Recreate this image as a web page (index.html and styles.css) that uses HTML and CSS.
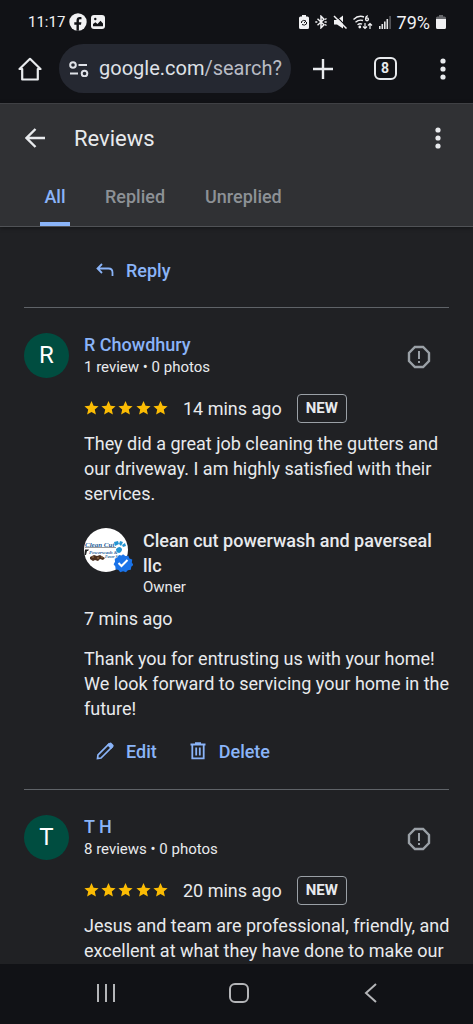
FILE: index.html
```html
<!DOCTYPE html>
<html lang="en">
<head>
    <meta charset="UTF-8">
    <meta name="viewport" content="width=device-width, initial-scale=1.0">
    <title>Reviews</title>
    <link rel="stylesheet" href="styles.css">
</head>
<body>
    <!-- shared shapes -->
    <svg class="defs" aria-hidden="true">
        <symbol id="stars" viewBox="0 0 84 14">
            <g fill="#fbbc04">
                <path id="star" d="M7.5 0l2.1 4.7 5 .5-3.8 3.4 1.1 5-4.4-2.6-4.4 2.6 1.1-5L.4 5.2l5-.5z"/>
                <use href="#star" x="17"/>
                <use href="#star" x="34"/>
                <use href="#star" x="52"/>
                <use href="#star" x="69"/>
            </g>
        </symbol>
        <symbol id="report" viewBox="0 0 24 24">
            <path d="M7.9 2h8.2L22 7.9v8.2L16.100 22H7.900L2 16.100V7.900z" fill="none" stroke="currentColor" stroke-width="2.400"/>
            <path d="M11 6h2v8h-2zM11 16h2v2h-2z" fill="currentColor"/>
        </symbol>
        <symbol id="dots" viewBox="0 0 6 22">
            <g fill="currentColor"><circle cx="3" cy="3" r="2.600"/><circle cx="3" cy="11" r="2.600"/><circle cx="3" cy="19" r="2.600"/></g>
        </symbol>
    </svg>

    <div class="status-bar">
        <span class="clock">11:17</span>
        <svg width="18" height="18" viewBox="0 0 18 18">
            <circle cx="9" cy="9" r="8.700" fill="#f1f1f3"/>
            <path d="M7.500 17.700v-6H5.300V9.200h2.200V7.400c0-2.300 1.300-3.400 3.300-3.400.7 0 1.300.1 1.700.2v2.100h-1.200c-1 0-1.400.5-1.400 1.300v1.600h2.500l-.4 2.500H9.900v6z" fill="#111216"/>
        </svg>
        <svg width="14" height="14" viewBox="0 0 14 14">
            <rect width="14" height="14" rx="3" fill="#f1f1f3"/>
            <path d="M2 11.200V9l2.400-1.800L6.500 9l3-3.200L12 8.500v2.700z" fill="#111216"/>
            <circle cx="4.300" cy="4" r="1.200" fill="#111216"/>
        </svg>
        <div class="status-icons">
            <svg width="10" height="14" viewBox="0 0 10 14">
                <path d="M3 0h4v1.500h1.500A1.500 1.500 0 0 1 10 3v9.500A1.500 1.500 0 0 1 8.500 14h-7A1.500 1.500 0 0 1 0 12.500V3a1.500 1.500 0 0 1 1.500-1.500H3z" fill="#f1f1f3"/>
                <path d="M2.500 8V6.500q2-2 4.500-.5L5 8M7.500 7v2q-2 2-4.500.5" fill="none" stroke="#111216" stroke-width="1"/>
            </svg>
            <svg width="12" height="14" viewBox="0 0 12 14" fill="none" stroke="#f1f1f3" stroke-width="1.500">
                <path d="M2.500 3.800l6.500 6L6 12.800V1.200l3 3-6.500 6"/>
                <path d="M.3 7h2M9.500 7h2.200M10 4.500l1.500-1M10 9.500l1.500 1"/>
            </svg>
            <svg width="14" height="14" viewBox="0 0 14 14">
                <path d="M1 5h3l6-4.500v13L4 9.500H1z" fill="#f1f1f3"/>
                <path d="M2 0l12 12" stroke="#111216" stroke-width="1.200"/>
                <path d="M1 1l12.500 12.500" stroke="#f1f1f3" stroke-width="1.500"/>
            </svg>
            <svg width="20" height="15" viewBox="0 0 20 15" fill="none" stroke="#f1f1f3" stroke-width="1.400">
                <path d="M.5 4.500Q5.500-.3 11 2M2.500 7.200q3.500-3 7.500-1.700M4.500 9.800q2.300-1.700 4.500-.6"/>
                <circle cx="6.800" cy="12" r=".7"/>
                <path d="M14.800.7q-2 .6-2.200 3" />
                <circle cx="14" cy="4.300" r="1.400"/>
                <path d="M12 8v5.500M10 11.500l2 2 2-2M17 14V8.500M15 10.500l2-2 2 2" stroke-width="1.200"/>
            </svg>
            <svg width="12" height="13" viewBox="0 0 12 13">
                <path d="M0 10h1.600v3H0zM2.500 8h1.600v5H2.500zM5 5.500h1.600V13H5zM7.500 3h1.600v10H7.500z" fill="#e4e4e6"/>
                <path d="M10.300 0h1.600v13h-1.600z" fill="#5b5c60"/>
            </svg>
            <span class="battery-level">79%</span>
            <svg width="10" height="14" viewBox="0 0 10 14">
                <path d="M3 0h4v1.500h1.500A1.500 1.500 0 0 1 10 3v2H0V3a1.500 1.500 0 0 1 1.500-1.500H3z" fill="#66676b"/>
                <path d="M0 4h10v8.500A1.500 1.500 0 0 1 8.500 14h-7A1.500 1.500 0 0 1 0 12.500z" fill="#f1f1f3"/>
            </svg>
        </div>
    </div>

    <div class="toolbar">
        <button class="icon-button" aria-label="Home">
            <svg width="24" height="24" viewBox="0 0 24 24" fill="none" stroke="currentColor" stroke-width="2.200" stroke-linejoin="round">
                <path d="M1.500 12L12 1.800 22.500 12H19.800v10.500H4.200V12z"/>
            </svg>
        </button>
        <div class="address">
            <svg width="20" height="16" viewBox="0 0 20 16" fill="none" stroke="currentColor" stroke-width="2">
                <circle cx="4" cy="4" r="2.800"/><path d="M9.500 4H18M1 12.500h8"/><circle cx="15.500" cy="12.500" r="2.800"/>
            </svg>
            <span>google.com<span class="path">/search?</span></span>
        </div>
        <button class="icon-button add" aria-label="New tab">
            <svg width="20" height="20" viewBox="0 0 20 20" stroke="currentColor" stroke-width="2.400"><path d="M0 10h20M10 0v20"/></svg>
        </button>
        <button class="icon-button tab-count"><span>8</span></button>
        <button class="icon-button" aria-label="Browser menu"><svg width="6" height="22"><use href="#dots"/></svg></button>
    </div>

    <header class="page-header">
        <div class="title-row">
            <button class="icon-button" aria-label="Back">
                <svg width="20" height="20" viewBox="0 0 20 20" fill="none" stroke="currentColor" stroke-width="2.400"><path d="M20 10H2M10.500 1L1.500 10l9 9"/></svg>
            </button>
            <h1>Reviews</h1>
            <button class="icon-button" aria-label="More options"><svg width="6" height="22"><use href="#dots"/></svg></button>
        </div>
        <nav class="tabs">
            <a href="#all" class="active">All</a>
            <a href="#replied">Replied</a>
            <a href="#unreplied">Unreplied</a>
        </nav>
    </header>

    <main>
        <div class="actions first">
            <button class="action">
                <svg width="18" height="18" viewBox="0 0 18 18" fill="none" stroke="currentColor" stroke-width="1.800"><path d="M6 3L1.500 7.500 6 12M1.500 7.500h11q4 0 4 4V15"/></svg>
                Reply
            </button>
        </div>

        <article class="review">
            <div class="avatar">R</div>
            <div class="review-body">
                <div class="review-head">
                    <div>
                        <a href="#chowdhury" class="name">R Chowdhury</a>
                        <div class="meta">1 review • 0 photos</div>
                    </div>
                    <button class="icon-button report" aria-label="Report review"><svg width="24" height="24"><use href="#report"/></svg></button>
                </div>
                <div class="rating">
                    <svg width="84" height="14" role="img" aria-label="5 stars"><use href="#stars"/></svg>
                    <span>14 mins ago</span>
                    <span class="badge">NEW</span>
                </div>
                <p class="comment">They did a great job cleaning the gutters and our driveway. I am highly satisfied with their services.</p>

                <div class="owner">
                    <div class="logo">
                        <svg width="44" height="44" viewBox="0 0 44 44">
                            <circle cx="22" cy="22" r="22" fill="#fff"/>
                            <path d="M1 19.500h31" stroke="#555" stroke-width=".6"/>
                            <g class="logo-text">
                                <text x="1" y="19">Clean Cut</text>
                                <text x="5" y="26" class="small">Powerwash &amp;</text>
                                <text x="21" y="30" class="tiny">Paver Seal</text>
                            </g>
                            <path d="M1 21.500h4l-1 1.500H3l-1 4H.5z" fill="#222"/>
                            <path d="M30 14l4-1 1 3-4 2zM36 13l3 1-2 4-2-2zM32 21q4-4 6 0 0 3-3 4-3-1-3-4zM38 17l3-2 1 3-3 1z" fill="#2495d2"/>
                            <path d="M6 29l4-2 3 1 3-1 5 3-2 2-3-1-2 2-3-1-2 1-3-2z" fill="#4b3020"/>
                            <path d="M8 29h2M13 30h2M17 29h2" stroke="#a27a4e" stroke-width="1"/>
                        </svg>
                        <svg class="verified" width="20" height="20" viewBox="0 0 20 20">
                            <path d="M10 .8l2.500 1.900 3.100-.4 1.200 2.900 2.900 1.200-.4 3.100 1.700 2.500-2.300 2-.5 3-3.100.5-2 2.200-3-1-3 1-1.900-2.400-3-.6-.3-3.100L.1 11.300l1.500-2.700-.3-3.100 2.900-1.200 1.500-2.700 3 .4z" transform="translate(.5 .5) scale(.95)" fill="#1a73e8"/>
                            <path d="M5.500 10l3 3 6-6" fill="none" stroke="#fff" stroke-width="2"/>
                        </svg>
                    </div>
                    <div>
                        <div class="owner-name">Clean cut powerwash and paverseal llc</div>
                        <div class="owner-role">Owner</div>
                    </div>
                </div>
                <div class="reply-time">7 mins ago</div>
                <p class="reply-text">Thank you for entrusting us with your home! We look forward to servicing your home in the future!</p>
                <div class="actions">
                    <button class="action">
                        <svg width="18" height="18" viewBox="0 0 18 18" fill="none" stroke="currentColor" stroke-width="1.700"><path d="M1.500 16.500l.5-3.500L13 2l3 3L5 16z"/><path d="M11 3l4 4 2.500-2.500q.5-1-.3-1.700L15.200.8q-.8-.6-1.700.2z" fill="currentColor" stroke="none"/></svg>
                        Edit
                    </button>
                    <button class="action">
                        <svg width="18" height="18" viewBox="0 0 18 18" fill="none" stroke="currentColor" stroke-width="1.800"><path d="M1.500 2.500h15M6 1.200h6M3.300 3v13.300h11.400V3M7.200 5.500v8M10.800 5.500v8"/></svg>
                        Delete
                    </button>
                </div>
            </div>
        </article>

        <article class="review">
            <div class="avatar">T</div>
            <div class="review-body">
                <div class="review-head">
                    <div>
                        <a href="#th" class="name">T H</a>
                        <div class="meta">8 reviews • 0 photos</div>
                    </div>
                    <button class="icon-button report" aria-label="Report review"><svg width="24" height="24"><use href="#report"/></svg></button>
                </div>
                <div class="rating">
                    <svg width="84" height="14" role="img" aria-label="5 stars"><use href="#stars"/></svg>
                    <span>20 mins ago</span>
                    <span class="badge">NEW</span>
                </div>
                <p class="comment">Jesus and team are professional, friendly, and excellent at what they have done to make our</p>
            </div>
        </article>
    </main>

    <div class="system-nav">
        <button class="icon-button" aria-label="Recent apps">
            <svg width="20" height="20" viewBox="0 0 20 20" stroke="currentColor" stroke-width="2"><path d="M2 1v18M10 1v18M18 1v18"/></svg>
        </button>
        <button class="icon-button" aria-label="Home screen">
            <svg width="20" height="20" viewBox="0 0 20 20" fill="none" stroke="currentColor" stroke-width="2"><rect x="1" y="1" width="18" height="18" rx="5"/></svg>
        </button>
        <button class="icon-button" aria-label="Go back">
            <svg width="20" height="20" viewBox="0 0 20 20" fill="none" stroke="currentColor" stroke-width="2"><path d="M15 1L5 10l10 9"/></svg>
        </button>
    </div>
</body>
</html>
```
FILE: styles.css
```css
* {
    box-sizing: border-box;
}
body {
    margin: 0;
    height: 100vh;
    display: flex;
    flex-direction: column;
    overflow: hidden;
    background: #202124;
    color: #e8eaed;
    font-family: Roboto, "Liberation Sans", sans-serif;
    font-size: 18px;
    line-height: 25px;
}
.defs {
    position: absolute;
    width: 0;
    height: 0;
}
svg {
    display: block;
    flex-shrink: 0;
}
p, h1 {
    margin: 0;
}
a {
    text-decoration: none;
}
button {
    font: inherit;
    color: inherit;
    background: none;
    border: none;
    padding: 0;
    cursor: pointer;
}
.icon-button {
    display: flex;
    align-items: center;
    justify-content: center;
    width: 24px;
    height: 40px;
    flex-shrink: 0;
}

/* phone status bar */
.status-bar {
    display: flex;
    align-items: center;
    gap: 4px;
    height: 44px;
    padding: 0 27px 0 28px;
    background: #111216;
    color: #f1f1f3;
    flex-shrink: 0;
}
.clock {
    font-size: 15px;
}
.status-icons {
    display: flex;
    align-items: center;
    gap: 6px;
    margin-left: auto;
}

/* browser toolbar */
.toolbar {
    display: flex;
    align-items: center;
    height: 59px;
    padding: 0 18px 10px;
    background: #111216;
    flex-shrink: 0;
}
.address {
    display: flex;
    align-items: center;
    gap: 10px;
    flex: 1;
    height: 49px;
    margin-left: 17px;
    padding-left: 10px;
    border-radius: 25px;
    background: #252831;
    color: #dfe1e7;
    font-size: 20px;
    white-space: nowrap;
}
.address .path {
    color: #b9bcc5;
}
.add {
    margin-left: 20px;
}
.tab-count {
    margin: 0 43px 0 38px;
}
.toolbar .icon-button:last-child {
    width: 6px;
    margin-right: 9px;
}
.tab-count span {
    width: 23px;
    height: 23px;
    border: 2px solid #e8eaed;
    border-radius: 6px;
    font-size: 14px;
    font-weight: 700;
    line-height: 19px;
}

/* reviews header */
.page-header {
    height: 124px;
    background: #303134;
    border-top: 1px solid #3f4044;
    border-bottom: 1px solid #505256;
    box-shadow: 0 1px 4px rgba(0, 0, 0, 0.4);
    flex-shrink: 0;
}
.title-row {
    display: flex;
    align-items: center;
    height: 68px;
    padding: 0 23px;
}
.title-row h1 {
    flex: 1;
    margin-left: 27px;
    font-size: 22px;
    font-weight: 400;
}
.tabs {
    display: flex;
    gap: 40px;
    height: 54px;
    padding-left: 40px;
    font-weight: 500;
}
.tabs a {
    padding-top: 12px;
    color: #8d9196;
}
.tabs .active {
    width: 30px;
    margin-right: -5px;
    text-align: center;
    color: #8ab4f8;
    border-bottom: 4px solid #8ab4f8;
    border-radius: 4px 4px 0 0;
}

/* review list */
main {
    flex: 1;
    min-height: 0;
    overflow: hidden;
    padding: 0 24px;
}
.actions {
    display: flex;
    gap: 32px;
    margin-top: 6px;
    padding-left: 12px;
}
.actions.first {
    margin: 0;
    padding: 19px 0 13px 72px;
}
.action {
    display: flex;
    align-items: center;
    gap: 12px;
    height: 48px;
    color: #8ab4f8;
    font-weight: 500;
}
.review {
    display: flex;
    gap: 15px;
    padding: 25px 0 14px;
    border-top: 1px solid #5f6368;
}
.avatar {
    width: 45px;
    height: 45px;
    border-radius: 50%;
    background: #004d40;
    color: #fff;
    font-size: 24px;
    line-height: 45px;
    text-align: center;
    flex-shrink: 0;
}
.review-body {
    flex: 1;
    min-width: 0;
}
.review-head {
    display: flex;
    justify-content: space-between;
    height: 44px;
}
.name {
    display: block;
    line-height: 24px;
    color: #8ab4f8;
    font-weight: 500;
}
.meta {
    font-size: 15px;
    line-height: 20px;
}
.report {
    height: 48px;
    margin-right: 18px;
    color: #9aa0a6;
}
.rating {
    display: flex;
    align-items: center;
    gap: 15px;
    height: 30px;
    margin: 16px 0 8px;
}
.badge {
    padding: 0 8px;
    border: 1px solid #9aa0a6;
    border-radius: 4px;
    font-size: 15px;
    font-weight: 700;
    line-height: 27px;
}
.comment, .reply-text {
    margin-right: -8px;
}
.owner {
    display: flex;
    gap: 15px;
    margin-top: 22px;
}
.logo {
    position: relative;
    width: 44px;
    height: 44px;
    flex-shrink: 0;
}
.logo-text {
    font-family: "Liberation Serif", serif;
    font-style: italic;
    font-weight: 700;
    font-size: 7px;
    fill: #1f5f9c;
}
.logo-text .small {
    font-size: 5px;
}
.logo-text .tiny {
    font-size: 4px;
}
.verified {
    position: absolute;
    right: -5px;
    bottom: -1px;
}
.owner-name {
    font-weight: 500;
}
.owner-role {
    font-size: 15px;
    line-height: 18px;
}
.reply-time {
    margin-top: 10px;
}
.reply-text {
    margin-top: 15px;
}

/* phone navigation */
.system-nav {
    display: flex;
    justify-content: space-between;
    align-items: center;
    height: 60px;
    padding: 0 90px 2px 94px;
    background: #111216;
    color: #b4b5b8;
    flex-shrink: 0;
}
```
